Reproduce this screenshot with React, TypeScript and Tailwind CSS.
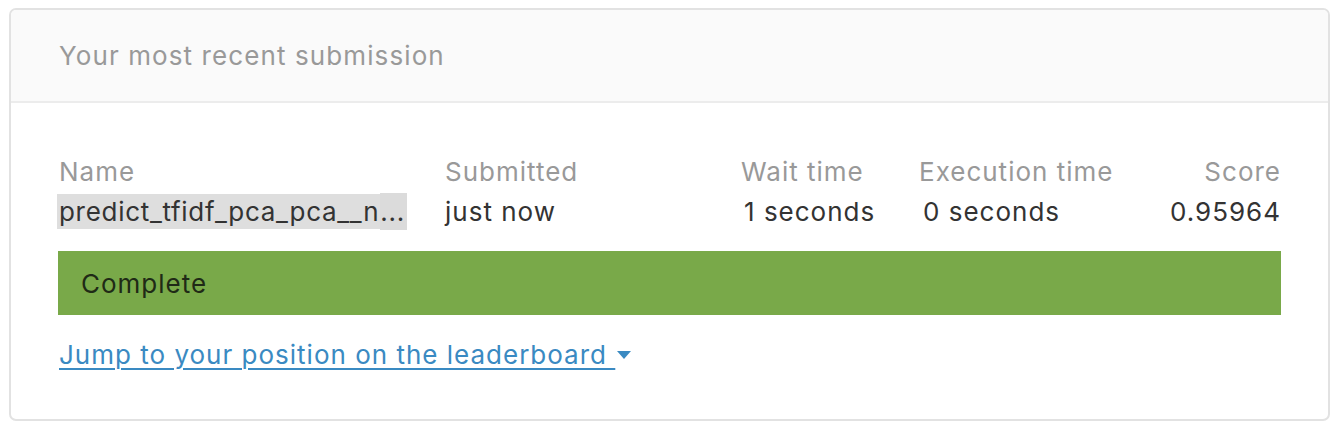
import React from "react";

export default function App() {
  return (
    <div className="w-[1334px] h-[432px] bg-white pt-[8px] pl-[9px] tracking-[1px]" style={{ fontFamily: "Inter, 'Noto Sans', sans-serif" }}>
      <div className="w-[1321px] h-[413px] border-2 border-[#e2e2e2] rounded-[7px] overflow-hidden flex flex-col">
        <div className="h-[93px] bg-[#fafafa] border-b-2 border-[#ececec] flex items-center pl-[48px] pb-[1px]">
          <span className="text-[26px] tracking-[1.1px] text-[#999999]">Your most recent submission</span>
        </div>
        <div className="pl-[48px] pr-[48px] pt-[49px]">
          <div className="flex text-[26px] leading-[40px] text-[#999999]">
            <div className="w-[386px]">Name</div>
            <div className="w-[296px]">Submitted</div>
            <div className="w-[178px]">Wait time</div>
            <div className="flex-1">Execution time</div>
            <div className="text-right -mr-[1px]">Score</div>
          </div>
          <div className="flex text-[26px] leading-[40px] text-[#333333]">
            <div className="w-[386px] -ml-[2px] tracking-[0.7px]">
              <span className="bg-[#dedede] py-[2px] pl-[2px] pr-[1px]">predict_tfidf_pca_pca__n</span>
              <span className="bg-[#dbdbdb] py-[3px] pr-[2px]">...</span>
            </div>
            <div className="w-[296px] ml-[2px]">just now</div>
            <div className="w-[178px] pl-[3px]">1 seconds</div>
            <div className="flex-1 pl-[4px]">0 seconds</div>
            <div className="text-right -mr-[1px]">0.95964</div>
          </div>
          <div className="mt-[19px] h-[64px] -ml-[1px] mr-[-1px] bg-[#79a949] flex items-center pl-[23px]">
            <span className="text-[26px] text-[#1f2a16]">Complete</span>
          </div>
          <div className="mt-[20px] flex items-center text-[26px] text-[#3a8ac2]">
            <a className="underline underline-offset-[4px] decoration-[1.5px]" href="#">Jump to your position on the leaderboard&nbsp;</a>
            <svg width="14" height="9" viewBox="0 0 14 9" className="ml-[2px] mt-[1px]">
              <path d="M0 0 H14 L7 8 Z" fill="#3a8ac2" />
            </svg>
          </div>
        </div>
      </div>
    </div>
  );
}
